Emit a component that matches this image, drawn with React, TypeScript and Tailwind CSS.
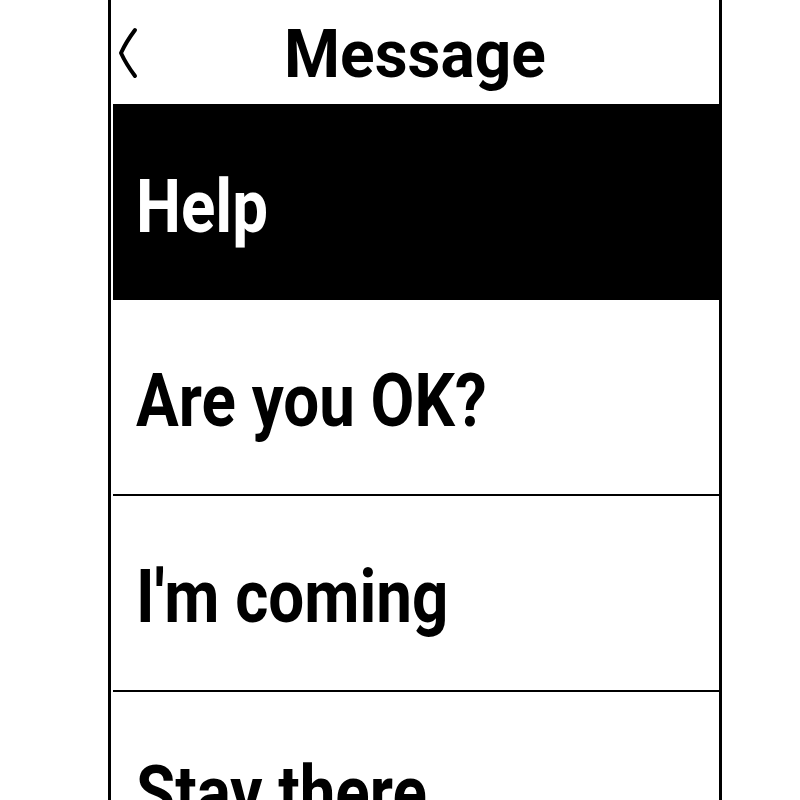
import React from "react";

const messages = ["Help", "Are you OK?", "I'm coming", "Stay there"];

function BackChevron() {
  return (
    <svg width="22" height="52" viewBox="0 0 22 52" fill="none">
      <path
        d="M18 3 Q9 15 4 26 Q9 37 18 49"
        stroke="#000"
        strokeWidth="4"
        strokeLinecap="round"
        strokeLinejoin="round"
      />
    </svg>
  );
}

export default function App() {
  const selected = 0;

  return (
    <div className="h-[800px] w-[800px] overflow-hidden bg-white font-[family-name:Roboto,sans-serif]">
      <div className="ml-[108px] h-full w-[614px] border-l-[3px] border-r-[3px] border-black">
        {/* Header */}
        <div className="grid h-[104px] grid-cols-[1fr_auto_1fr] items-center pt-[5px]">
          <div className="justify-self-start pl-[6px] -mt-[3px]">
            <BackChevron />
          </div>
          <h1 className="scale-x-[0.97] text-[66px] leading-none font-bold text-black">Message</h1>
          <div />
        </div>

        {/* Message list */}
        <div className="pl-[2px]">
          {messages.map((m, i) => (
            <div
              key={m}
              className={
                i === selected
                  ? "flex h-[196px] items-center bg-black pt-[10px] pl-[23px] text-white"
                  : "flex h-[196px] items-center border-b-2 border-black pt-[8px] pl-[23px] text-black"
              }
            >
              <div className="origin-left scale-x-[0.86] whitespace-nowrap text-[74px] leading-none font-bold">
                {m}
              </div>
            </div>
          ))}
        </div>
      </div>
    </div>
  );
}
